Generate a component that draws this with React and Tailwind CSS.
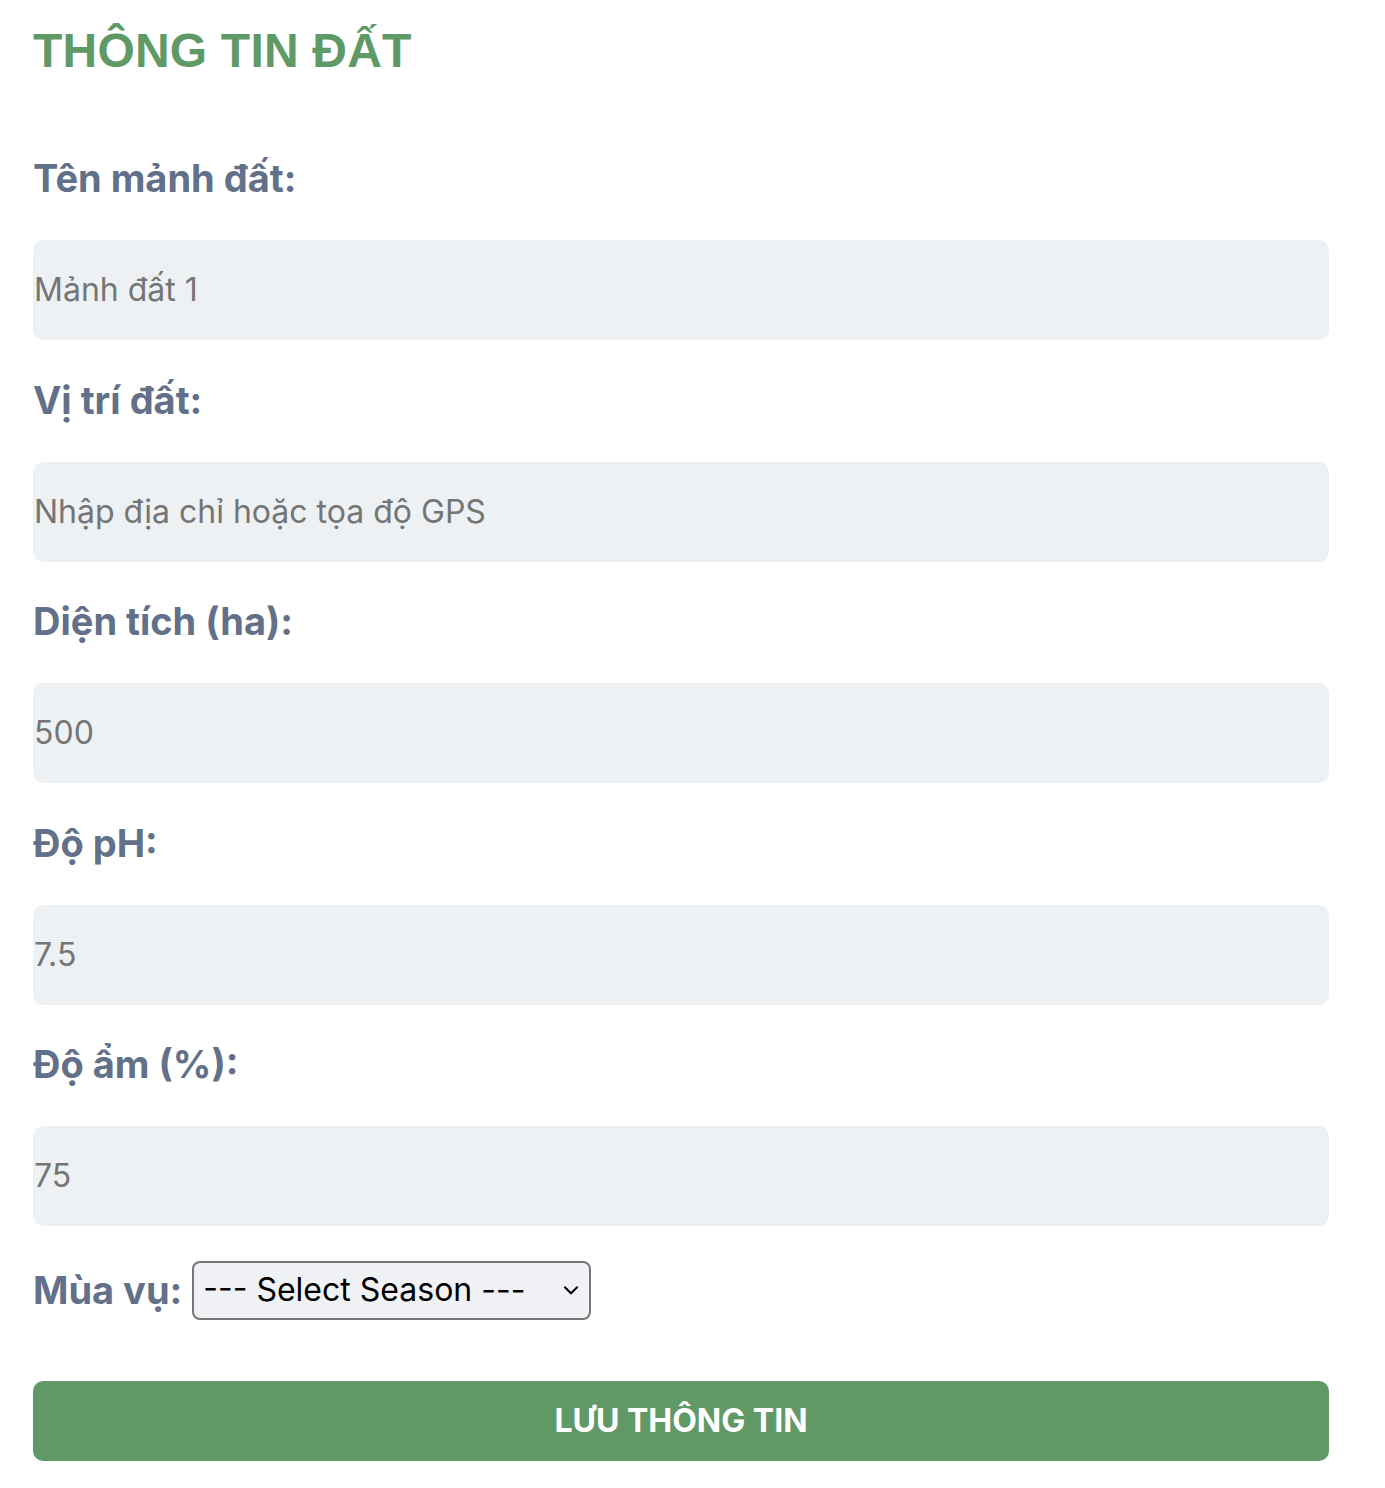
import React from "react";

const fields = [
  { label: "Tên mảnh đất:", value: "Mảnh đất 1" },
  { label: "Vị trí đất:", value: "Nhập địa chỉ hoặc tọa độ GPS" },
  { label: "Diện tích (ha):", value: "500" },
  { label: "Độ pH:", value: "7.5" },
  { label: "Độ ẩm (%):", value: "75" },
];

export default function App() {
  return (
    <div className="bg-white min-h-[1488px] w-[1385px] pl-[33px] pt-[22px]" style={{ fontFamily: "Inter, 'Noto Sans', sans-serif" }}>
      <h1
        className="text-[48px] font-bold text-[#5f9966] leading-[58px] mb-[75px] tracking-[0.2px]"
        style={{ fontFamily: "'Liberation Sans', Arial, sans-serif" }}
      >
        THÔNG TIN ĐẤT
      </h1>
      <div className="w-[1296px] flex flex-col">
        {fields.map((f, i) => (
          <div key={i} className="flex flex-col">
            <div className="text-[38px] font-bold text-[#627089] leading-[46px] h-[46px]">{f.label}</div>
            <div className="mt-[39px] h-[100px] rounded-[10px] bg-[#eef1f4] flex items-center text-[32px] text-[#757575] pl-[1px] mb-[36.5px]">
              {f.value}
            </div>
          </div>
        ))}
        <div className="flex items-center gap-[10px] -mt-[2px]">
          <div className="text-[38px] font-bold text-[#627089] leading-[46px]">Mùa vụ:</div>
          <div className="w-[399px] h-[59px] border-2 border-[#767676] rounded-[8px] bg-[#eff1f4] flex items-center justify-between pl-[9px] pr-[7px] text-[32px] text-black">
            <span>--- Select Season ---</span>
            <svg width="22" height="22" viewBox="0 0 20 20" fill="none" stroke="#000" strokeWidth="1.8">
              <path d="M4 7l6 6 6-6" />
            </svg>
          </div>
        </div>
        <button className="mt-[61px] h-[80px] w-full rounded-[10px] bg-[#609966] text-white text-[32px] font-bold">
          LƯU THÔNG TIN
        </button>
      </div>
    </div>
  );
}
